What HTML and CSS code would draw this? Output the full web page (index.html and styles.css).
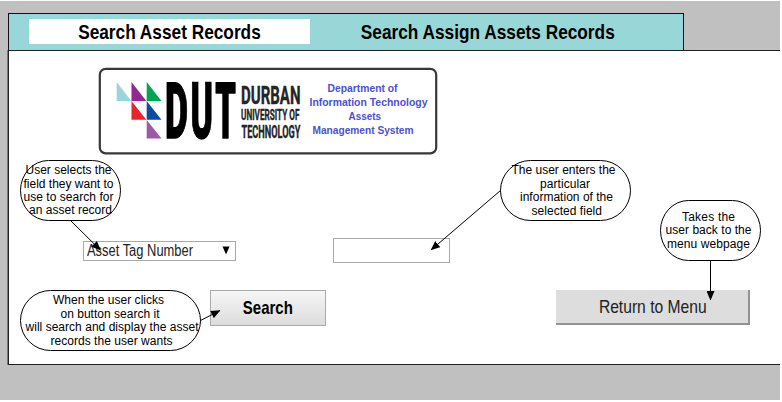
FILE: index.html
```html
<!DOCTYPE html>
<html lang="en">
<head>
<meta charset="utf-8">
<title>Search Asset Records</title>
<link rel="stylesheet" href="styles.css">
</head>
<body>
<div class="page">
  <nav class="tabs">
    <a class="tab tab-active"><span>Search Asset Records</span></a>
    <a class="tab"><span>Search Assign Assets Records</span></a>
  </nav>
  <main class="panel">
    <svg class="logo" width="340" height="88" viewBox="98 67 340 88">
      <rect x="99.8" y="68.8" width="336.4" height="84.6" rx="6" fill="#fff" stroke="#38383b" stroke-width="2.2"/>
      <path fill="#9ad6d9" d="M116.7 82V101H131.3z"/>
      <path fill="#93278f" d="M131.5 82V101H146.3z"/>
      <path fill="#00a551" d="M146.7 82V101H161.5z"/>
      <path fill="#e8242c" d="M131.5 101V119.7H146.3z"/>
      <path fill="#0d4da1" d="M146.7 101V119.7H161.5z"/>
      <path fill="#9b59a7" d="M146.7 119.9V138.6H161.5z"/>
      <g class="logo-mark">
        <text x="165" y="137.5" textLength="23" lengthAdjust="spacingAndGlyphs">D</text>
        <text x="190.5" y="137.5" textLength="22.5" lengthAdjust="spacingAndGlyphs">U</text>
        <text x="215.2" y="137.5" textLength="20.6" lengthAdjust="spacingAndGlyphs">T</text>
      </g>
      <g class="logo-name">
        <text class="n1" x="241" y="104" textLength="59.5" lengthAdjust="spacingAndGlyphs">DURBAN</text>
        <text class="n2" x="241" y="119.7" textLength="58.5" lengthAdjust="spacingAndGlyphs">UNIVERSITY OF</text>
        <text class="n3" x="241.5" y="138" textLength="59" lengthAdjust="spacingAndGlyphs">TECHNOLOGY</text>
      </g>
      <g class="logo-dept">
        <text x="327.5" y="92" textLength="70" lengthAdjust="spacingAndGlyphs">Department of</text>
        <text x="309.5" y="106" textLength="118" lengthAdjust="spacingAndGlyphs">Information Technology</text>
        <text x="348.5" y="120" textLength="32.5" lengthAdjust="spacingAndGlyphs">Assets</text>
        <text x="312.5" y="134" textLength="101" lengthAdjust="spacingAndGlyphs">Management System</text>
      </g>
    </svg>
    <div class="fields">
      <div class="select"><span>Asset Tag Number</span><svg width="8" height="9" viewBox="0 0 8 9"><path d="M0.5 0.5H7.5L4 8.5z"/></svg></div>
      <div class="input"></div>
    </div>
    <div class="actions">
      <div class="btn btn-search"><span>Search</span></div>
      <div class="btn btn-return"><span>Return to Menu</span></div>
    </div>
  </main>
  <svg class="notes" width="780" height="399" viewBox="0 1 780 399">
    <defs>
      <marker id="head" markerUnits="userSpaceOnUse" markerWidth="10" markerHeight="8" refX="9" refY="4" orient="auto"><path d="M0 0L9.5 4L0 8z"/></marker>
    </defs>
    <g class="shapes">
      <rect x="20.5" y="160.5" width="100" height="60" rx="28" ry="30"/>
      <rect x="500.5" y="160.5" width="130" height="60" rx="30"/>
      <rect x="660.5" y="200.5" width="100" height="60" rx="28" ry="30"/>
      <rect x="20.5" y="290.5" width="180" height="60" rx="30"/>
      <path d="M70.5 220.5L100.5 250.2" marker-end="url(#head)"/>
      <path d="M500.5 190.5L431 250" marker-end="url(#head)"/>
      <path d="M710.5 260.5V300" marker-end="url(#head)"/>
      <path d="M200.5 320.5L220 310.5" marker-end="url(#head)"/>
    </g>
    <g class="note-text">
      <text x="25.5" y="174" textLength="86">User selects the</text>
      <text x="23.5" y="188" textLength="90">field they want to</text>
      <text x="23.5" y="201" textLength="90">use to search for</text>
      <text x="29" y="214" textLength="83">an asset record</text>
      <text x="511.5" y="174" textLength="104">The user enters the</text>
      <text x="540" y="188" textLength="50">particular</text>
      <text x="520" y="201" textLength="93">information of the</text>
      <text x="531.5" y="215" textLength="70.5">selected field</text>
      <text x="682" y="221" textLength="53">Takes the</text>
      <text x="665.5" y="234" textLength="86">user back to the</text>
      <text x="667" y="248" textLength="83">menu webpage</text>
      <text x="53" y="304" textLength="111">When the user clicks</text>
      <text x="60.5" y="318" textLength="99">on button search it</text>
      <text x="25.5" y="331" textLength="173">will search and display the asset</text>
      <text x="50.5" y="345" textLength="122">records the user wants</text>
    </g>
  </svg>
</div>
</body>
</html>
```

FILE: styles.css
```css
* { box-sizing: border-box; }

body {
  margin: 0;
  background: #fff;
  font-family: "Liberation Sans", Arial, sans-serif;
  color: #000;
}

.page {
  position: relative;
  width: 780px;
  height: 399px;
  margin-top: 1px;
  padding: 12px 0 0 8px;
  background: #c0c0c0;
  overflow: hidden;
}

.tabs {
  display: flex;
  width: 676px;
  height: 37px;
  padding: 5px 0 0 20px;
  background: #98d7d7;
  border: 1px solid #111;
  border-width: 1px 1px 0;
}

.tab {
  display: flex;
  justify-content: center;
  width: 281px;
  height: 25px;
  font-weight: 700;
  font-size: 20.5px;
  line-height: 25px;
  white-space: nowrap;
}

.tab span { transform: scaleX(.842); }
.tab-active { background: #fff; }
.tab:not(.tab-active) { width: 355px; }

.panel {
  width: 772px;
  height: 315px;
  padding: 16px 0 0 89px;
  background: #fff;
  border: 1px solid #222;
  border-right: 0;
  box-shadow: -1px 0 0 #777;
}

.logo { display: block; }

.logo-mark {
  font: 900 78px Roboto, "Open Sans", sans-serif;
  stroke: #000;
  stroke-width: 1.3px;
}

.logo-name {
  font-family: Roboto, "Open Sans", sans-serif;
  font-weight: 700;
  fill: #262425;
  stroke: #262425;
  stroke-width: .4px;
}

.n1 { font-size: 26.5px; }
.n2 { font-size: 15px; }
.n3 { font-size: 18.5px; }

.logo-dept {
  font-weight: 700;
  font-size: 11.5px;
  fill: #4b50d9;
}

.fields {
  display: flex;
  align-items: center;
  gap: 97px;
  height: 25px;
  margin: 83px 0 0 -15px;
}

.select {
  display: flex;
  align-items: center;
  justify-content: space-between;
  width: 153px;
  height: 20px;
  padding: 0 5px 0 3px;
  border: 1px solid #a9a9a9;
  font-size: 16px;
  line-height: 18px;
  white-space: nowrap;
}

.select span {
  width: 107px;
  color: #222;
  transform: scaleX(.807);
  transform-origin: left;
}

.input {
  width: 117px;
  height: 25px;
  border: 1px solid #a9a9a9;
}

.actions {
  display: flex;
  gap: 230px;
  margin: 27px 0 0 112px;
}

.btn {
  display: flex;
  align-items: center;
  justify-content: center;
  font-size: 18.5px;
  white-space: nowrap;
}

.btn-search {
  width: 116px;
  height: 36px;
  border: 1px solid #aaa;
  background: linear-gradient(#f6f6f6, #dcdcdc);
  font-weight: 700;
}

.btn-search span { transform: scaleX(.81); }

.btn-return {
  width: 194px;
  height: 35px;
  padding-left: 2px;
  border: solid #929292;
  border-width: 0 2px 2px 0;
  background: #ddd;
  color: #222;
}

.btn-return span { transform: scaleX(.845); }

.notes {
  position: absolute;
  left: 0;
  top: 0;
}

.shapes { fill: none; stroke: #000; stroke-width: 1; }
marker path { fill: #000; stroke: none; }
.note-text { font-size: 12px; }
```
